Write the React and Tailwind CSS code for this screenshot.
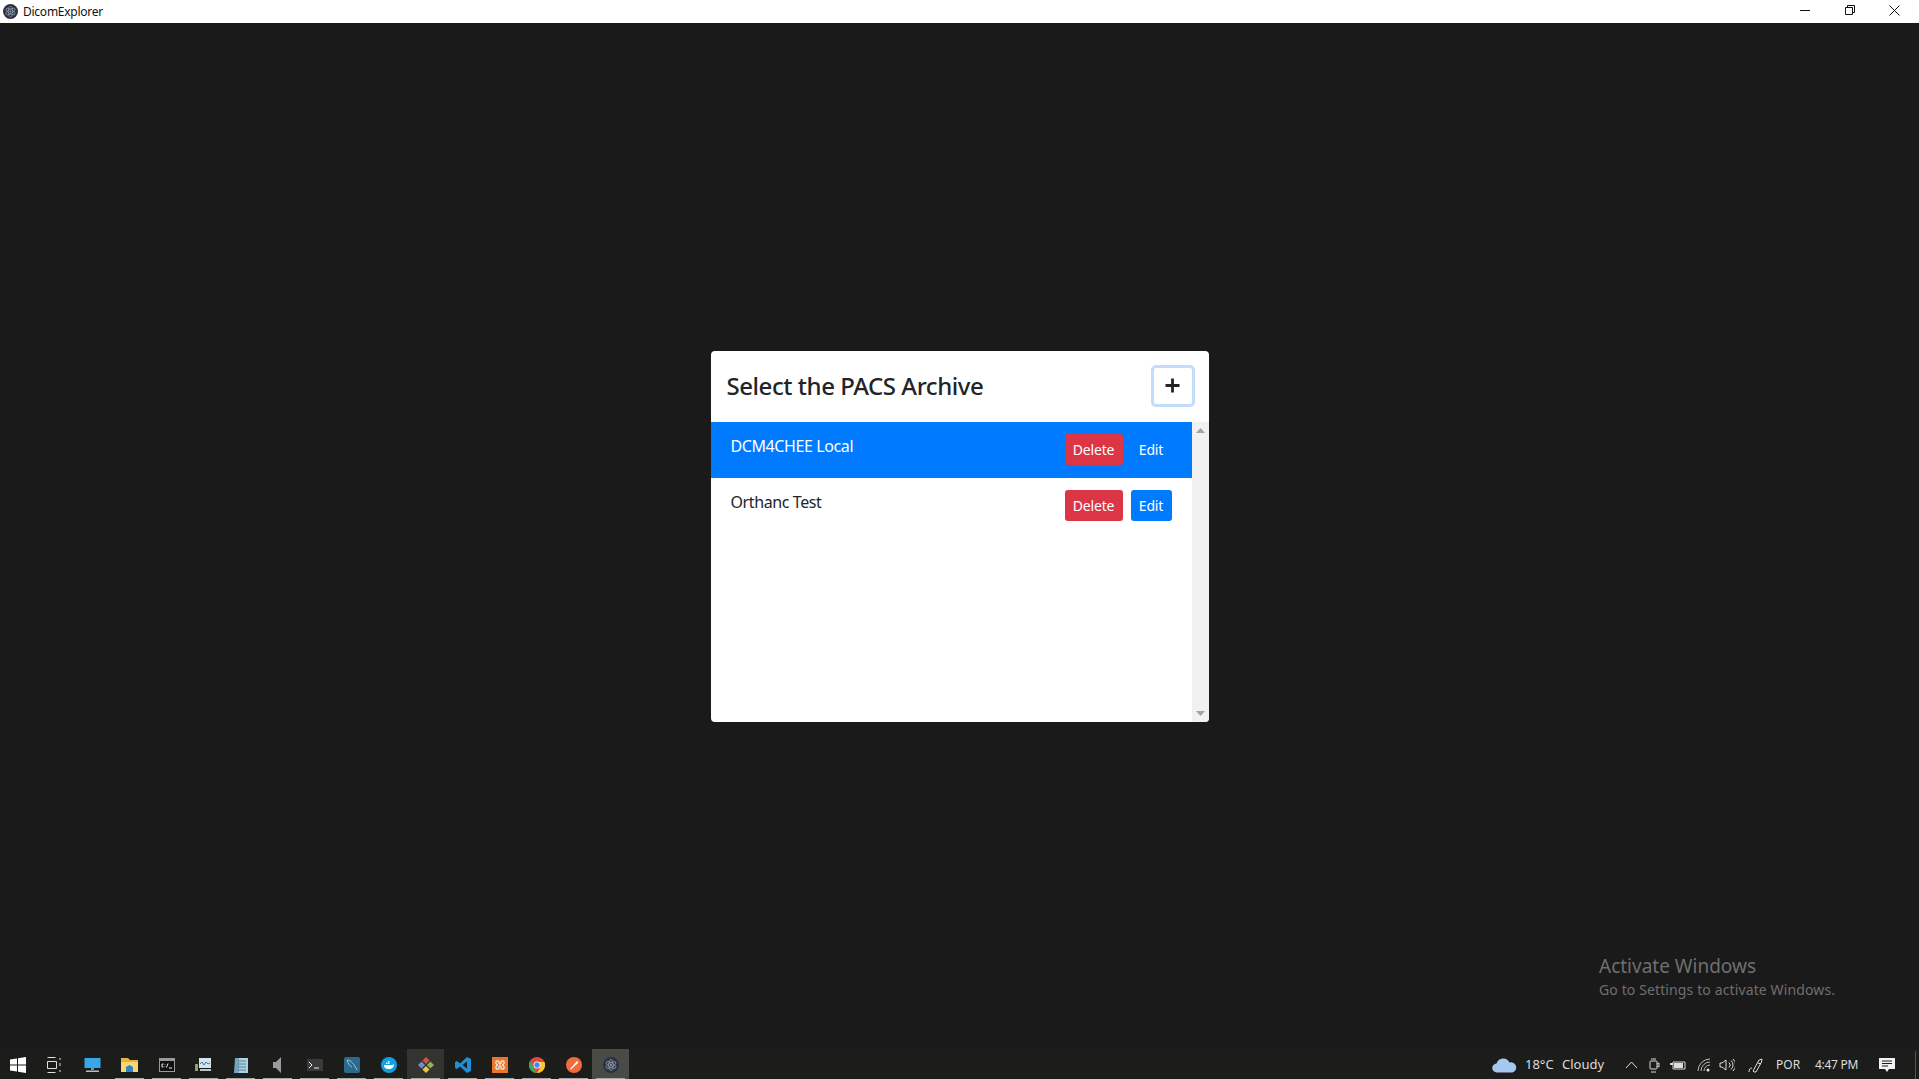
import React from 'react';

const UI_FONT = { fontFamily: '"Noto Sans", sans-serif' };

// electron style atom badge, used in title bar and taskbar
function AppIcon({ size = 15 }) {
  return (
    <svg width={size} height={size} viewBox="0 0 16 16">
      <circle cx="8" cy="8" r="8" fill="#2b3342" />
      <g fill="none" stroke="#9aa7b5" strokeWidth="0.7">
        <ellipse cx="8" cy="8" rx="5.5" ry="2.2" transform="rotate(30 8 8)" />
        <ellipse cx="8" cy="8" rx="5.5" ry="2.2" transform="rotate(90 8 8)" />
        <ellipse cx="8" cy="8" rx="5.5" ry="2.2" transform="rotate(150 8 8)" />
      </g>
      <circle cx="8" cy="8" r="1" fill="#9aa7b5" />
    </svg>
  );
}

function TitleBar() {
  return (
    <div className="h-[23px] shrink-0 bg-white flex items-center justify-between">
      <div className="flex items-center pl-[3px] gap-[5px]">
        <AppIcon />
        <span className="text-[12px] tracking-[-0.25px] text-[#111]">DicomExplorer</span>
      </div>
      <div className="flex items-center h-full pb-[3px] pr-[2px]">
        <div className="w-[45px] flex justify-center">
          <svg width="10" height="10" viewBox="0 0 10 10"><path d="M0 5.5h10" stroke="#111" fill="none" /></svg>
        </div>
        <div className="w-[45px] flex justify-center">
          <svg width="10" height="10" viewBox="0 0 10 10" fill="none" stroke="#111"><path d="M0.5 2.500h7v7h-7z M2.500 2.500v-2h7v7h-2" /></svg>
        </div>
        <div className="w-[45px] flex justify-center">
          <svg width="11" height="11" viewBox="0 0 11 11" fill="none" stroke="#111"><path d="M0.5 0.500l10 10M10.500 0.500l-10 10" /></svg>
        </div>
      </div>
    </div>
  );
}

function ServerRow({ name, active }) {
  return (
    <div className={`h-[56px] flex justify-between pl-5 pr-5 ${active ? 'bg-[#007bff] text-white' : 'bg-white text-[#212529]'}`}>
      <span className="text-[16px] tracking-[-0.4px] leading-6 pt-[12px]">{name}</span>
      <div className="flex items-start gap-2 pt-[12px]">
        <button className="h-[31px] w-[58px] bg-[#dc3545] text-white text-[14px] tracking-[-0.15px] rounded-[3px]">Delete</button>
        <button className={`h-[31px] w-[41px] text-white text-[14px] tracking-[-0.15px] rounded-[3px] ${active ? '' : 'bg-[#007bff]'}`}>Edit</button>
      </div>
    </div>
  );
}

function ArchiveDialog() {
  return (
    <div className="w-[498px] h-[371px] bg-white rounded-[4px] flex flex-col overflow-hidden">
      <div className="h-[71px] shrink-0 flex items-center justify-between pl-4 pr-[14px]">
        <h1 className="text-[24px] font-medium tracking-[-0.45px] text-[#212529]">Select the PACS Archive</h1>
        <button className="w-[44px] h-[42px] mb-[1px] rounded-[5px] border-[3px] border-[#c4dcfb] flex items-center justify-center">
          <svg width="15" height="15" viewBox="0 0 15 15"><path d="M7.500 0.500v14M0.500 7.500h14" stroke="#212529" strokeWidth="2.800" fill="none" /></svg>
        </button>
      </div>
      <div className="flex-1 flex min-h-0">
        <div className="flex-1">
          <ServerRow name="DCM4CHEE Local" active />
          <ServerRow name="Orthanc Test" />
        </div>
        <div className="w-[17px] bg-[#f1f1f1] flex flex-col items-center justify-between py-[6px]">
          <svg width="9" height="5" viewBox="0 0 9 5"><path d="M4.500 0L9 5H0z" fill="#a3a3a3" /></svg>
          <svg width="9" height="5" viewBox="0 0 9 5"><path d="M0 0h9L4.500 5z" fill="#a3a3a3" /></svg>
        </div>
      </div>
    </div>
  );
}

const TASK_ICONS = [
  { id: 'start', draw: <svg className="mr-[2px]" width="16" height="16" viewBox="0 0 16 16" fill="#fff"><path d="M0 2.400l7-1v6.200H0zM8 1.300L16 0v7.600H8zM0 8.400h7v6.200l-7-1zM8 8.400h8V16l-8-1.300z" /></svg> },
  { id: 'view', draw: <svg className="mr-[4px]" width="16" height="16" viewBox="0 0 16 16" fill="none" stroke="#ddd"><path d="M1.500 .5h8M1.500 15.500h8M1.500 4.500h9v7h-9zM14 1v2M14 6v3M14 13v2" /></svg> },
  { id: 'pc', draw: <svg width="17" height="16" viewBox="0 0 17 16"><rect x="0.5" y="1" width="16" height="10" fill="#3aa8e8" /><path d="M7 11h3v2H7z" fill="#7d8c99" /><path d="M2 13.500h13V15H2z" fill="#a8c0d0" /></svg> },
  { id: 'folder', running: true, draw: <svg width="17" height="16" viewBox="0 0 17 16"><path d="M0 1h7l2 2h8v12H0z" fill="#e8b23f" /><path d="M0 5h17v10H0z" fill="#f7d774" /><path d="M5 15v-5l3.500-2 3.500 2v5z" fill="#2e86c8" /></svg> },
  { id: 'cmd', running: true, draw: <svg width="16" height="14" viewBox="0 0 16 14"><rect width="16" height="14" fill="#9a9a9a" /><rect x="1" y="3" width="14" height="10" fill="#111" /><path d="M4.500 6H3v3h1.500M6 6v.5M6 8.500V9M7.500 9.500L9 5.500M10 10h3" stroke="#eee" fill="none" /></svg> },
  { id: 'perf', running: true, draw: <svg width="17" height="16" viewBox="0 0 17 16"><rect x="0" y="7" width="3" height="7" fill="#8aa37a" /><rect x="4" y="1" width="12" height="10" fill="#d6e4ea" /><path d="M5 7l2-2 2 3 2-3 2 2 2-1" stroke="#2a7fb8" fill="none" /><path d="M5 12h11v2H5z" fill="#b9c6cc" /></svg> },
  { id: 'notes', running: true, draw: <svg width="14" height="16" viewBox="0 0 14 16"><path d="M1 1h13v15H1z" fill="#a8d3e0" /><path d="M1 1h4v15H0z" fill="#73a6b8" /><path d="M4 4h8M4 7h8M4 10h8M4 13h8" stroke="#5a7f8e" fill="none" /></svg> },
  { id: 'sound', running: true, draw: <svg className="mr-[2px]" width="8" height="16" viewBox="0 0 8 16"><path d="M0 5h3l5-5v16l-5-5H0z" fill="#9b9b9b" /></svg> },
  { id: 'term', running: true, draw: <svg width="16" height="12" viewBox="0 0 16 12"><rect width="16" height="12" fill="#3a3a3a" /><path d="M2 3l3 3-3 3M7 9h5" stroke="#eee" fill="none" /></svg> },
  { id: 'mysql', running: true, draw: <svg width="16" height="16" viewBox="0 0 16 16"><rect width="16" height="16" rx="2" fill="#2b6a8c" /><path d="M3 3c4 0 7 4 10 10M3 3c1 4 3 6 5 7" stroke="#a8c8da" fill="none" /></svg> },
  { id: 'docker', running: true, draw: <svg width="16" height="16" viewBox="0 0 16 16"><circle cx="8" cy="8" r="8" fill="#119fe2" /><path d="M3 8h8c1 0 1.500-.5 2-1 0 3-2 5-5 5-3 0-5-1-5-4z" fill="#fff" /><path d="M5 5.500h1.500V7H5zM7 5.500h1.500V7H7zM7 4h1.500v1H7z" fill="#fff" /></svg> },
  { id: 'git', running: true, draw: <svg width="16" height="16" viewBox="0 0 18 18"><path d="M9 0l4 4-4 4-4-4z" fill="#d0553f" /><path d="M14 5l4 4-4 4-4-4z" fill="#8bb35a" /><path d="M9 10l4 4-4 4-4-4z" fill="#e8c84a" /><path d="M4 5l4 4-4 4-4-4z" fill="#6c8fd0" /></svg> },
  { id: 'vscode', running: true, draw: <svg width="16" height="16" viewBox="0 0 16 16"><path d="M12 0l4 2v12l-4 2-7-6.500L2 12 0 11V5l2-1 3 2.500z" fill="#1f8fd8" /><path d="M12 4.500L7.500 8l4.500 3.500z" fill="#1c1d1a" /></svg> },
  { id: 'xampp', running: true, draw: <svg width="16" height="16" viewBox="0 0 16 16"><rect width="16" height="16" fill="#e8772e" /><path d="M4 4h3v3h2V4h3v3l-2 1 2 1v3H9V9H7v3H4V9l2-1-2-1z" fill="none" stroke="#fff" /></svg> },
  { id: 'chrome', running: true, draw: <svg width="16" height="16" viewBox="0 0 16 16"><circle cx="8" cy="8" r="8" fill="#e0483b" /><path d="M1 4l4 7 3 5a8 8 0 0 1-7-12z" fill="#3aa757" /><path d="M8 5h7.500a8 8 0 0 1-7.500 11l3.500-6z" fill="#f8c92c" /><circle cx="8" cy="8" r="3.500" fill="#fff" /><circle cx="8" cy="8" r="2.700" fill="#4285f4" /></svg> },
  { id: 'postman', running: true, draw: <svg width="16" height="16" viewBox="0 0 16 16"><circle cx="8" cy="8" r="8" fill="#f26b3a" /><path d="M4 12l7-8 1.500 1.500L5 12.500z" fill="#fff" /></svg> },
  { id: 'dicom', running: true, draw: <AppIcon size={16} /> },
];

function Taskbar() {
  return (
    <div className="h-[30px] shrink-0 bg-[#1c1d1a] flex items-center justify-between">
      <div className="flex items-center h-full">
        {TASK_ICONS.map((icon) => (
          <div
            key={icon.id}
            className={`relative h-full w-[37px] pt-[2px] flex items-center justify-center ${icon.id === 'dicom' ? 'bg-[#4a4a47]' : ''} ${icon.id === 'git' ? 'bg-[#33342f]' : ''}`}
          >
            {icon.draw}
            {icon.running && <div className="absolute bottom-0 inset-x-[4px] h-[1px] bg-[#a8a8a4]" />}
          </div>
        ))}
      </div>
      <div className="flex items-center h-full pt-[2px] whitespace-nowrap text-[13px] text-[#dcdcdc]">
        <svg width="25" height="16" viewBox="0 0 25 16"><path d="M5 15.500a4.500 4.500 0 0 1-.5-9 7 7 0 0 1 13-1 5 5 0 0 1 3 10z" fill="#a5c8ee" /></svg>
        <span className="ml-[8px] w-[28px]">18°C</span>
        <span className="ml-[9px] w-[43px]">Cloudy</span>
        <svg className="ml-[20px]" width="13" height="8" viewBox="0 0 13 8" fill="none" stroke="#dcdcdc"><path d="M1 7l5.500-6L12 7" /></svg>
        <svg className="ml-[11px]" width="11" height="15" viewBox="0 0 11 15" fill="none" stroke="#dcdcdc"><rect x="1" y="3" width="7" height="8" rx="1" /><path d="M8 6l2-1v4l-2-1M2 1h5M2 14h5" /></svg>
        <svg className="ml-[10px]" width="16" height="12" viewBox="0 0 16 12"><path d="M3 3h12v7H3z" fill="none" stroke="#dcdcdc" /><path d="M4 4h9v5H4zM0 6h3V4H0z" fill="#dcdcdc" /></svg>
        <svg className="ml-[11px]" width="14" height="14" viewBox="0 0 14 14" fill="none" stroke="#bbb"><path d="M1 13a12 12 0 0 1 12-12M4 13a9 9 0 0 1 9-9M7 13a6 6 0 0 1 6-6" /><circle cx="11" cy="12" r="1.500" fill="#eee" stroke="none" /></svg>
        <svg className="ml-[8px]" width="16" height="14" viewBox="0 0 16 14" fill="none" stroke="#dcdcdc"><path d="M1 5h2l4-3v10l-4-3H1zM10 4.500a3.500 3.500 0 0 1 0 5M12 2.500a6 6 0 0 1 0 9M14 1a8 8 0 0 1 0 12" /></svg>
        <svg className="ml-[13px]" width="17" height="16" viewBox="0 0 17 16" fill="none" stroke="#dcdcdc"><path d="M5 14L11 3l3-1-.5 3L8 15l-2 0zM1 15c0-3 1-4 3-4M10 6l3 1" /></svg>
        <span className="ml-[11px] w-[24px] text-[12px]">POR</span>
        <span className="ml-[15px] w-[42px] text-[12px] tracking-[-0.3px]">4:47 PM</span>
        <svg className="ml-[22px]" width="16" height="16" viewBox="0 0 16 16"><path d="M0 1h16v11h-6l-2 3-2-3H0z" fill="#f2f2f2" /><path d="M3 4h10M3 6.500h10M3 9h6" stroke="#1c1d1a" fill="none" /></svg>
        <div className="ml-[20px] mr-[3px] w-px h-full bg-[#55564f]" />
      </div>
    </div>
  );
}

export default function App() {
  return (
    <div className="h-screen w-full flex flex-col bg-[#1a1a1a] overflow-hidden" style={UI_FONT}>
      <TitleBar />
      <main className="flex-1 relative flex items-center justify-center min-h-0">
        <ArchiveDialog />
        {/* windows watermark sits over the app */}
        <div className="absolute left-[1599px] top-[931px] text-[#6f6f6f] pointer-events-none">
          <div className="text-[19px] leading-[25px]">Activate Windows</div>
          <div className="text-[14px] tracking-[0.12px] leading-[21px]">Go to Settings to activate Windows.</div>
        </div>
      </main>
      <Taskbar />
    </div>
  );
}
